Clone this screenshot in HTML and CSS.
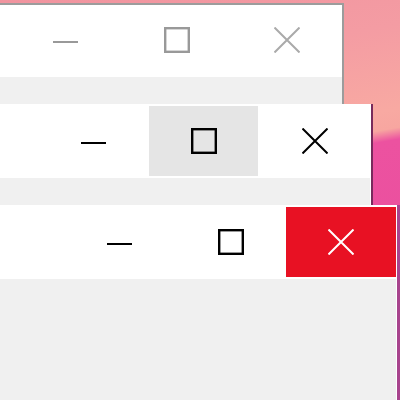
FILE: index.html
```html
<!DOCTYPE html>
<html lang="en">
<head>
  <meta charset="UTF-8" />
  <title>Caption buttons</title>
  <link rel="stylesheet" href="styles.css">
</head>
<body>
  <div class="desktop">

    <!-- back window, inactive -->
    <div class="window win-back inactive">
      <div class="titlebar">
        <div class="cap-btn">
          <svg class="ico" viewBox="0 0 26 26"><rect x="0" y="14" width="25" height="2" /></svg>
        </div>
        <div class="cap-btn">
          <svg class="ico" viewBox="0 0 26 26"><rect class="outline" x="1.2" y="1.2" width="23.6" height="23.6" /></svg>
        </div>
        <div class="cap-btn cap-close">
          <svg class="ico" viewBox="0 0 26 26"><path class="stroke" d="M0.5 0.5 L25.5 25.5 M25.5 0.5 L0.5 25.5" /></svg>
        </div>
      </div>
      <div class="client"></div>
    </div>

    <!-- middle window, maximize hovered -->
    <div class="window win-mid">
      <div class="titlebar">
        <div class="cap-btn">
          <svg class="ico" viewBox="0 0 26 26"><rect x="0" y="14" width="25" height="2" /></svg>
        </div>
        <div class="cap-btn hover">
          <svg class="ico" viewBox="0 0 26 26"><rect class="outline" x="1.2" y="1.2" width="23.6" height="23.6" /></svg>
        </div>
        <div class="cap-btn cap-close">
          <svg class="ico" viewBox="0 0 26 26"><path class="stroke" d="M0.5 0.5 L25.5 25.5 M25.5 0.5 L0.5 25.5" /></svg>
        </div>
      </div>
      <div class="client"></div>
    </div>

    <!-- front window, close hovered -->
    <div class="window win-front">
      <div class="titlebar">
        <div class="cap-btn">
          <svg class="ico" viewBox="0 0 26 26"><rect x="0" y="14" width="25" height="2" /></svg>
        </div>
        <div class="cap-btn">
          <svg class="ico" viewBox="0 0 26 26"><rect class="outline" x="1.2" y="1.2" width="23.6" height="23.6" /></svg>
        </div>
        <div class="cap-btn cap-close danger">
          <svg class="ico" viewBox="0 0 26 26"><path class="stroke" d="M0.5 0.5 L25.5 25.5 M25.5 0.5 L0.5 25.5" /></svg>
        </div>
      </div>
      <div class="client"></div>
    </div>

  </div>
</body>
</html>
```

FILE: styles.css
```css
:root {
  --title-bg: #fff;
  --client-bg: #f0f0f0;
  --hover-bg: #e5e5e5;
  --close-red: #e81123;
  --icon: #000;
  --icon-inactive: #999;
}
body {
  margin: 0;
  padding: 0;
  font-family: "Segoe UI", "Noto Sans", sans-serif;
}
.desktop {
  position: relative;
  width: 400px;
  height: 400px;
  overflow: hidden;
  background: linear-gradient(170deg,
    #f1949f 0%,
    #f49ca3 20%,
    #f8a9a2 38%,
    #f7a6a0 42%,
    #ec52a0 44.5%,
    #e94c9c 100%);
}
/* windows sit on the desktop at their own spots */
.window {
  position: absolute;
  width: 460px;
  background: var(--client-bg);
  border: 2px solid #fff;
  border-bottom: none;
  border-left: none;
}
.win-back {
  top: 3px;
  right: 56px;
  height: 200px;
  border-color: #9c9c9c;
}
.win-mid {
  top: 104px;
  right: 29px;
  height: 200px;
  border-right-width: 1px;
  box-shadow: 2px 0 0 #782a5c;
}
.win-front {
  top: 205px;
  right: 3px;
  height: 220px;
  border-right-width: 1px;
  box-shadow: 3px 0 0 #a8448e;
}
.titlebar {
  height: 72px;
  background: var(--title-bg);
  display: flex;
  justify-content: flex-end;
  align-items: flex-start;
}
.client {
  height: 100%;
}
.cap-btn {
  width: 111px;
  height: 70px;
  display: flex;
  align-items: center;
  justify-content: center;
  color: var(--icon);
}
.cap-close {
  width: 110px;
}
.cap-btn.hover {
  width: 109px;
  margin-right: 2px;
  background: var(--hover-bg);
}
.cap-btn.danger {
  background: var(--close-red);
  color: #fff;
}
.inactive .cap-btn {
  color: var(--icon-inactive);
}
.inactive .cap-close {
  color: #aaa;
}
.ico {
  width: 26px;
  height: 26px;
  display: block;
  fill: currentColor;
}
.ico .outline {
  fill: none;
  stroke: currentColor;
  stroke-width: 2.4;
}
.ico .stroke {
  fill: none;
  stroke: currentColor;
  stroke-width: 2;
}
```
